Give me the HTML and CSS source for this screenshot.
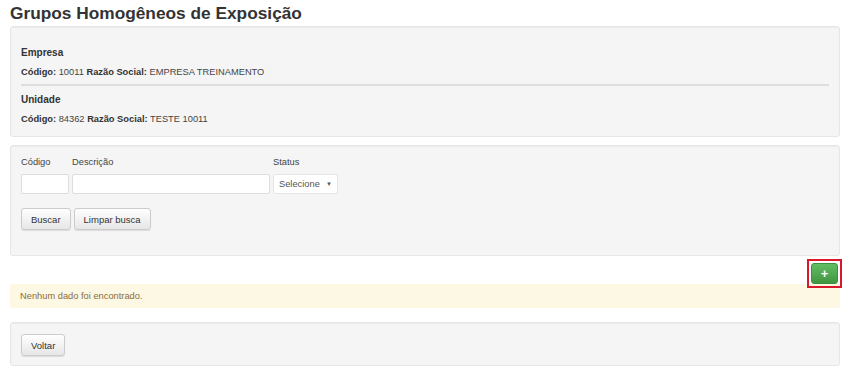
FILE: index.html
```html
<!DOCTYPE html>
<html lang="pt-BR">
<head>
    <meta charset="UTF-8">
    <meta name="viewport" content="width=device-width, initial-scale=1.0">
    <title>Grupos Homogêneos de Exposição</title>
    <link rel="stylesheet" href="styles.css">
</head>
<body>
    <div class="page">
        <h1 class="page-title">Grupos Homogêneos de Exposição</h1>

        <div class="well info">
            <h5>Empresa</h5>
            <p><b>Código:</b> 10011 <b>Razão Social:</b> EMPRESA TREINAMENTO</p>
            <hr>
            <h5>Unidade</h5>
            <p><b>Código:</b> 84362 <b>Razão Social:</b> TESTE 10011</p>
        </div>

        <div class="well filter">
            <div class="fields">
                <div class="field">
                    <label for="codigo">Código</label>
                    <input id="codigo" class="input-codigo" type="text">
                </div>
                <div class="field">
                    <label for="descricao">Descrição</label>
                    <input id="descricao" class="input-descricao" type="text">
                </div>
                <div class="field">
                    <label for="status">Status</label>
                    <div class="select">Selecione <span class="caret">▼</span></div>
                </div>
            </div>
            <div class="buttons">
                <button class="btn">Buscar</button>
                <button class="btn">Limpar busca</button>
            </div>
        </div>

        <div class="toolbar">
            <span class="highlight"><button class="btn-add">+</button></span>
        </div>

        <div class="alert">Nenhum dado foi encontrado.</div>

        <div class="well footer">
            <button class="btn">Voltar</button>
        </div>
    </div>
</body>
</html>
```

FILE: styles.css
```css
body {
    font-family: 'Liberation Sans', Arial, sans-serif;
    font-size: 9.3px;
    color: #444;
    background-color: #fff;
    margin: 0;
}

.page {
    padding: 0 10px;
}

.page-title {
    font-size: 17.3px;
    font-weight: bold;
    color: #333;
    margin: 4px 0 4px 0;
    line-height: 18px;
}

.well {
    background-color: #f5f5f5;
    border: 1px solid #e6e6e6;
    border-radius: 3px;
    box-shadow: inset 0 1px 1px rgba(0, 0, 0, 0.04);
}

.info {
    padding: 16px 10px 5px 10px;
}

.info h5 {
    font-size: 10px;
    font-weight: bold;
    color: #333;
    margin: 4px 0 7px 0;
    line-height: 12px;
}

.info p {
    margin: 0 0 6px 0;
    line-height: 12px;
}

.info p b {
    color: #333;
}

.info hr {
    border: none;
    border-top: 2px solid #dedede;
    margin: 4px 0 8px 0;
}

.filter {
    margin-top: 8px;
    padding: 10px 10px 25px 10px;
}

.fields {
    display: flex;
    gap: 3px;
}

.field {
    display: flex;
    flex-direction: column;
}

.field label {
    line-height: 12px;
    margin-bottom: 6px;
    color: #444;
}

input {
    height: 18px;
    border: 1px solid #ddd;
    border-radius: 2px;
    padding: 0 4px;
    background-color: #fff;
    box-sizing: content-box;
    margin: 0;
}

.input-codigo {
    width: 38px;
}

.input-descricao {
    width: 188px;
}

.select {
    height: 18px;
    width: 53px;
    padding: 0 5px;
    box-sizing: content-box;
    border: 1px solid #e4e4e4;
    border-radius: 2px;
    background-color: #fff;
    color: #555;
    line-height: 18px;
    display: flex;
    justify-content: space-between;
}

.caret {
    font-size: 6px;
}

.buttons {
    display: flex;
    gap: 3px;
    margin-top: 14px;
}

.btn {
    font-family: 'Liberation Sans', Arial, sans-serif;
    font-size: 9.5px;
    color: #333;
    height: 22px;
    padding: 0 9px;
    border: 1px solid #ccc;
    border-radius: 3px;
    background: linear-gradient(#fff, #e6e6e6);
    box-shadow: 0 1px 1px rgba(0, 0, 0, 0.1);
}

.toolbar {
    display: flex;
    justify-content: flex-end;
    height: 29px;
    margin-top: 3px;
    margin-bottom: -4px;
    margin-right: -2px;
    position: relative;
    z-index: 1;
}

.highlight {
    display: flex;
    padding: 2px;
    border: 2px solid #d9182a;
}

.btn-add {
    width: 27px;
    height: 21px;
    border: 1px solid #3e8f3e;
    border-radius: 3px;
    background: linear-gradient(#62bd62, #419641);
    color: #fff;
    font-size: 13px;
    font-weight: bold;
    font-family: 'Liberation Sans', Arial, sans-serif;
    line-height: 16px;
    padding: 0;
}

.alert {
    background-color: #fcf8e3;
    color: #8a6d3b;
    padding: 0 10px;
    height: 24px;
    line-height: 24px;
    border-radius: 2px;
}

.footer {
    margin-top: 14px;
    padding: 11px 10px 9px 10px;
}
```
